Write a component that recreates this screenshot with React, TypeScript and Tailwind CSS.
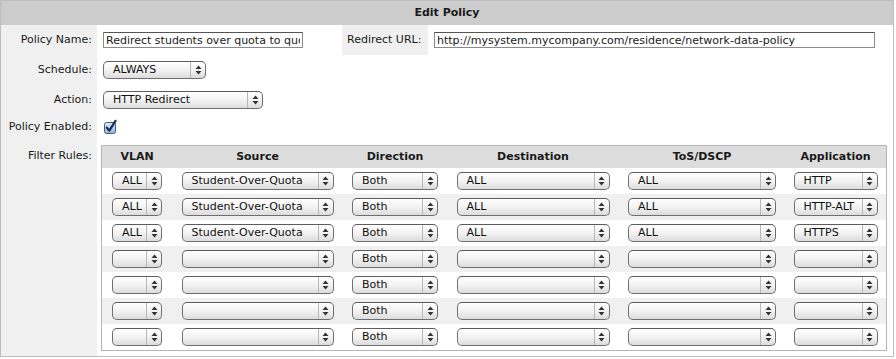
import React from "react";

const rows = [
  ["ALL", "Student-Over-Quota", "Both", "ALL", "ALL", "HTTP"],
  ["ALL", "Student-Over-Quota", "Both", "ALL", "ALL", "HTTP-ALT"],
  ["ALL", "Student-Over-Quota", "Both", "ALL", "ALL", "HTTPS"],
  ["", "", "Both", "", "", ""],
  ["", "", "Both", "", "", ""],
  ["", "", "Both", "", "", ""],
  ["", "", "Both", "", "", ""],
];

const colWidths = ["w-[50px]", "w-[152px]", "w-[86px]", "w-[153px]", "w-[148px]", "w-[84px]"];
const headers = ["VLAN", "Source", "Direction", "Destination", "ToS/DSCP", "Application"];

function Arrows() {
  return (
    <svg width="7" height="10" viewBox="0 0 7 10">
      <polygon points="3.5,0.5 0.5,4 6.5,4" fill="#333" />
      <polygon points="0.5,6 6.5,6 3.5,9.5" fill="#333" />
    </svg>
  );
}

function Select({ value, w }: { value: string; w: string }) {
  return (
    <div
      className={`${w} flex h-[18px] items-stretch rounded-[5px] border border-[#6f6f6f] border-t-[#5c5c5c] bg-linear-to-b from-white via-[#f3f3f3] to-[#dcdcdc] text-[#111]`}
    >
      <span className="flex-1 overflow-hidden whitespace-nowrap pl-[9px] leading-[16px]">{value}</span>
      <span className="flex w-[15px] shrink-0 items-center justify-center border-l border-[#b8b8b8]">
        <Arrows />
      </span>
    </div>
  );
}

function Row({ label, h, children, top }: { label: string; h: string; children?: React.ReactNode; top?: boolean }) {
  return (
    <div className={`flex ${h}`}>
      <div
        className={`flex w-[96px] shrink-0 justify-end bg-[#f0f0f0] pr-[5px] ${top ? "items-start pt-[10px] leading-[13px]" : "items-center"}`}
      >
        {label}
      </div>
      <div className={`flex flex-1 pl-[6px] ${top ? "items-start" : "items-center"}`}>{children}</div>
    </div>
  );
}

function Checkbox() {
  return (
    <svg width="15" height="15" viewBox="0 0 15 15" className="ml-[1px] mt-[-2px]">
      <defs>
        <linearGradient id="cb" x1="0" y1="0" x2="0" y2="1">
          <stop offset="0" stopColor="#dce9fa" />
          <stop offset="1" stopColor="#8db3e6" />
        </linearGradient>
      </defs>
      <rect x="0.5" y="3.5" width="11" height="11" rx="2" fill="url(#cb)" stroke="#4c5d7a" />
      <path d="M2.8 8.6 L5.3 11.6 L11.5 1.8" fill="none" stroke="#1b2a4c" strokeWidth="2.2" strokeLinecap="round" strokeLinejoin="round" />
    </svg>
  );
}

export default function App() {
  return (
    <div className="h-[359px] w-[896px] bg-white font-['DejaVu_Sans',Verdana,sans-serif] text-[11px] text-[#1a1a1a]">
      <div className="flex h-[357px] w-[894px] flex-col border border-[#bdbdbd]">
        <div className="flex h-[24px] shrink-0 items-center justify-center bg-[#cccccc] font-bold">Edit Policy</div>

        <Row label="Policy Name:" h="h-[30px]">
          <input
            readOnly
            value="Redirect students over quota to quota page"
            className="h-[16px] w-[200px] border border-[#8a8a8a] border-t-[#555] px-[2px] text-[11px] leading-[14px] outline-none"
          />
          <div className="ml-[39px] flex w-[86px] items-center self-stretch bg-[#f0f0f0] pl-[5px]">Redirect URL:</div>
          <input
            readOnly
            value="http://mysystem.mycompany.com/residence/network-data-policy"
            className="ml-[6px] h-[16px] w-[441px] border border-[#8a8a8a] border-t-[#555] px-[2px] text-[11px] leading-[14px] outline-none"
          />
        </Row>

        <Row label="Schedule:" h="h-[30px]">
          <Select value="ALWAYS" w="w-[103px]" />
        </Row>

        <Row label="Action:" h="h-[30px]">
          <Select value="HTTP Redirect" w="w-[160px]" />
        </Row>

        <Row label="Policy Enabled:" h="h-[24px]">
          <Checkbox />
        </Row>

        <Row label="Filter Rules:" h="flex-1" top>
          <div className="ml-[-2px] mt-[6px] w-[786px] border border-[#b5b5b5]">
            <div className="grid h-[22px] grid-cols-[70px_171px_104px_172px_166px_1fr] items-center bg-[#dddddd] font-bold">
              {headers.map((h) => (
                <div key={h} className="text-center">
                  {h}
                </div>
              ))}
            </div>
            {rows.map((r, i) => (
              <div
                key={i}
                className={`grid h-[26px] grid-cols-[70px_171px_104px_172px_166px_1fr] items-center ${i % 2 === 1 ? "bg-[#f0f0f0]" : "bg-white"}`}
              >
                {r.map((v, j) => (
                  <div key={j} className="flex justify-center">
                    <Select value={v} w={colWidths[j]} />
                  </div>
                ))}
              </div>
            ))}
          </div>
        </Row>
      </div>
    </div>
  );
}
